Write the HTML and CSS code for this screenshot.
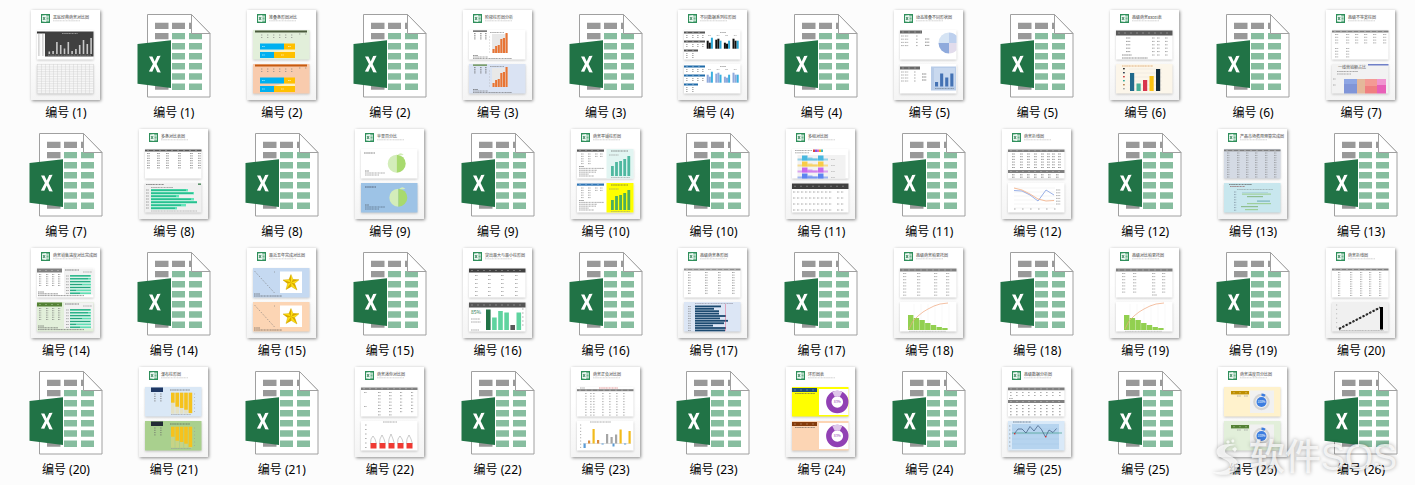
FILE: index.html
```html
<!DOCTYPE html>
<html lang="zh-CN">
<head>
  <meta charset="UTF-8">
  <meta name="viewport" content="width=device-width, initial-scale=1.0">
  <title>编号</title>
  <link rel="stylesheet" href="styles.css">
</head>
<body>
  <!-- shared symbols -->
  <svg class="defs" width="0" height="0" aria-hidden="true">
    <symbol id="xls" viewBox="0 0 74 90">
      <path d="M10.5 4.5H54.5L73 23.5V87H10.5Z" fill="#fff" stroke="#a0a0a0"/>
      <g fill="#999">
        <path d="M18 12.7h13.5v6.3H18zM35 12.7h13v6.3H35zM52 12.7h2.5v6.3H52zM18 22.9h13.5v6.3H18zM18 73.5h13.5v6.3H18z"/>
      </g>
      <g fill="#87bd9f">
        <path d="M35 22.9h13v6.3H35zM35 33h13v6.6H35zM35 43h13v6.6H35zM35 53h13v6.6H35zM35 63.2h13v6.6H35zM35 73.5h13v6.6H35z"/>
        <path d="M52 22.9h13v6.3H52zM52 33h13v6.6H52zM52 43h13v6.6H52zM52 53h13v6.6H52zM52 63.2h13v6.6H52zM52 73.5h13v6.6H52z"/>
      </g>
      <path d="M54.5 4.5V23.5H73Z" fill="#fff" stroke="#a0a0a0"/>
      <path d="M0.5 34L34 30.2V78L0.5 73.8Z" fill="#217346"/>
      <path d="M12 46.6l3.4-.2 2.3 5 2.5-5.3 3.4-.3-4 8.2 4.2 8.4-3.6-.2-2.5-5.6-2.4 5.2-3.4-.2 4-7.7z" fill="#fff"/>
    </symbol>
    <symbol id="logo" viewBox="0 0 9 9">
      <rect width="9" height="9" fill="#2f8f5b"/>
      <path d="M4.8 1.6H8V7.4H4.8Z" fill="#d8eee1"/>
      <path d="M5.4 3.1H7.6M5.4 4.5H7.6M5.4 5.9H7.6" stroke="#2f8f5b" stroke-width=".6"/>
      <path d="M1 1.6L5.2 1V8L1 7.4Z" fill="#e9f6ef"/>
      <path d="M2 3L4.1 6M4.1 3L2 6" stroke="#217346" stroke-width=".8"/>
    </symbol>
  </svg>

  <main>
    <ul class="files" id="files"></ul>
  </main>

  <div class="watermark">
    <svg class="watermark-logo" viewBox="0 0 34 38" aria-hidden="true">
      <path d="M25 6C14 3 3 8 6 15C8 20 19 20 19 26C19 31 9 34 1 33C12 39 28 35 27 25C26 17 14 17 14 12C14 8 20 6 25 6Z"/>
      <path d="M17 1l2 2-2 2-2-2zM22 0l1.5 2-1.5 2-2-2zM24 8l2 2-2 3-3-3z"/>
    </svg>
    <span>软件SOS</span>
  </div>

  <script src="script.js"></script>
</body>
</html>
```

FILE: styles.css
```css
* {
  box-sizing: border-box;
  margin: 0;
  padding: 0;
}

body {
  background-color: #fcfcfc;
  color: #000;
  font-family: "Noto Sans", "Noto Sans CJK SC", sans-serif;
  font-size: 12px;
  min-height: 100vh;
  position: relative;
  overflow-x: hidden;
}

.defs {
  position: absolute;
}

/* file grid */
.files {
  display: grid;
  grid-template-columns: repeat(13, 1fr);
  row-gap: 8px;
  padding: 10px 0 7px 12px;
  list-style: none;
}

.file {
  display: flex;
  flex-direction: column;
  align-items: center;
  gap: 5px;
  color: inherit;
  text-decoration: none;
}

.file-name {
  line-height: 16px;
  white-space: nowrap;
}

.icon {
  display: block;
  width: 74px;
  height: 90px;
}

.thumb {
  display: block;
  width: 69px;
  height: 90px;
  margin-right: 1px;
  background: linear-gradient(#fff 40%, #f4f4f4);
  box-shadow: 1px 1px 3px rgba(0, 0, 0, 0.45);
}

.thumb text {
  font-family: "Noto Sans CJK SC", sans-serif;
}

.thumb-title {
  font-size: 4px;
  font-weight: 500;
  fill: #666;
}

.card {
  filter: drop-shadow(0 1px 1px rgba(0, 0, 0, 0.2));
}

/* watermark */
.watermark {
  position: absolute;
  right: 18px;
  bottom: 3px;
  display: flex;
  align-items: center;
  gap: 4px;
  color: rgba(255, 255, 255, 0.75);
  font-size: 36px;
  line-height: 48px;
  font-family: "Liberation Sans", "Noto Sans CJK SC", sans-serif;
  font-weight: 500;
  text-shadow: 0 0 4px rgba(0, 0, 0, 0.35);
  pointer-events: none;
}

.watermark-logo {
  width: 34px;
  height: 38px;
  fill: currentColor;
  filter: drop-shadow(0 0 2px rgba(0, 0, 0, 0.35));
}
```

FILE: script.js
```js
// drawing helpers, page is 69 x 90
const R = (x, y, w, h, f) => `<rect x="${x}" y="${y}" width="${w}" height="${h}" fill="${f}"/>`;

// line of small print
const L = (x, y, w, c = '#777') =>
  `<path d="M${x} ${y}h${w}" stroke="${c}" stroke-width=".9" stroke-dasharray="1.6 .3 .9 .4" opacity=".65"/>`;

const P = (pts, c, w = 0.6) => `<polyline points="${pts}" fill="none" stroke="${c}" stroke-width="${w}"/>`;

// cells of a table
function cells(xs, y, rows, step, w = 3, c = '#777') {
  let out = '';
  for (let r = 0; r < rows; r++) {
    xs.forEach(x => { out += L(x, y + r * step, w * 0.85, c); });
  }
  return out;
}

function head(x, y, w, h, c) {
  return R(x, y, w, h, c) + `<path d="M${x + 2} ${y + h / 2}h${w - 3}" stroke="#fff" stroke-width=".8" stroke-dasharray="2 4" opacity=".35"/>`;
}

// vertical bars standing on a base line
function bars(x, base, step, w, hs, colors) {
  return hs.map((h, i) => {
    const c = Array.isArray(colors) ? colors[i % colors.length] : colors;
    return h > 0 ? R(x + i * step, base - h, w, h, c) : R(x + i * step, base, w, -h, c);
  }).join('');
}

const hbars = (x, y, step, h, ws, c) => ws.map((w, i) => R(x, y + i * step, w, h, c)).join('');

const note = y => L(10, y, 5, '#444') + L(10, y + 1.5, 15, '#666') + L(10, y + 3, 39, '#666');

function card(y, color, content) {
  return `<g class="card">${R(6, y, 56.5, 29.5, color)}</g>${content}`;
}

const top_ = (color, content) => card(20, color, content);
const low = (color, content) => card(54, color, `<g transform="translate(0 34)">${content}</g>`);

function splitBars(c) {
  return R(8, 20.5, 52, 2, c) + cells([14, 20, 26, 32, 38, 44], 25, 2, 2.5, 1.6) + cells([52, 58], 24, 1, 2, 1.6) +
    '<path d="M37 39.5H48V42H27Z" fill="#fff2c0"/>' +
    R(13, 33.5, 24, 6, '#00b0f0') + R(37, 33.5, 11, 6, '#ffc000') +
    R(13, 42, 14, 6, '#00b0f0') + R(27, 42, 21, 6, '#ffc000') +
    L(15, 36.5, 3, '#dff') + L(15, 45, 3, '#dff') + L(41, 36.5, 3, '#fff') + L(34, 45, 3, '#fff');
}

function stairs(c) {
  return R(10, 20.5, 14, 1.2, c) + cells([11, 17, 22], 23.5, 4, 1.8, 2, '#555') + L(27, 22.5, 14) +
    R(29, 24, 16, 19, '#e8e8e8') + bars(29.5, 43, 2.6, 2.1, [4, 7, 8, 14, 15, 20], '#e87434') +
    cells([26], 27, 6, 3, 1.2, '#aaa') + note(45.5);
}

function clusters(headColor, dark, bright) {
  let out = head(6, 21.5, 21, 2, headColor) + cells([8, 14, 19, 24], 25.5, 2, 2, 2) +
    head(6, 30.5, 21, 2, headColor) + cells([8, 14, 19, 24], 34.5, 2, 2, 2) +
    head(6, 39.5, 14, 2, headColor) + cells([8, 14], 43.5, 3, 2, 2) + L(42, 22.5, 6);
  [[8, 6, 11], [9, 10, 8], [6, 5, 8], [10, 8, 8]].forEach((h, i) => {
    out += bars(28.7 + i * 8.6, 38.7, 2.1, 2, h, [dark, dark, bright]) + L(30 + i * 8.6, 25.5, 3, '#999');
  });
  return out;
}

const apple = (cx, cy) =>
  `<path d="M${cx} ${cy - 9}a9 9 0 0 0 0 18z" fill="#d3edba"/><path d="M${cx} ${cy - 9}a9 9 0 0 1 0 18z" fill="#a8da6e"/>` +
  `<path d="M${cx + 1} ${cy - 9}q3 -3 6 0q-3 1 -6 0z" fill="#d3edba"/>`;

function teal(headColor, bg, bar) {
  return head(6, 20.5, 27, 2.2, headColor) + cells([10, 17], 25, 5, 2.4, 3) + cells([24, 29], 25, 2, 2.4, 3) +
    L(8, 37.5, 5, '#555') + [25, 18, 17, 10, 15].map((w, i) => L(8, 39.4 + i * 1.9, w)).join('') +
    R(35.5, 20, 27, 29.5, bg) + L(40, 22, 17, '#444') + L(38, 26, 10, '#888') +
    bars(40, 47, 4.1, 2.8, [10, 14, 15, 17, 20], bar) + L(40, 48.5, 19, '#999');
}

function stream(y, c) {
  return `<g fill="${c}"><path d="M11.5 ${y}V${y - 2}H42V${y}Z" opacity=".55"/>` +
    `<path d="M16 ${y - 5}h5.5v5h-5.5zM32 ${y - 5}h5.5v5h-5.5z"/><path d="M21.5 ${y - 3}h5v1h5v2h-10z" opacity=".6"/></g>` +
    L(45, y - 1, 4, '#aaa');
}

function greenBars(headColor) {
  return head(6, 20.5, 25, 4, headColor) + cells([8, 15, 21, 27], 26.5, 6, 2.2, 2.6, '#666') +
    L(7, 44, 6, '#444') + L(7, 45.8, 20, '#444') + L(7, 47.6, 46, '#555') +
    R(33, 20.5, 29, 26, '#f2f2f2') + L(34, 22, 14, '#333') + L(52, 24, 9, '#888') +
    [0, 1, 2, 3, 4, 5, 6].map(i => R(39, 27 + i * 2.9, 21, 1.7, '#5fe0b4') +
      R(39, 27.4 + i * 2.9, [20, 18, 20, 12, 20, 6, 10][i], 0.9, '#1d9f78') + L(35, 28 + i * 2.9, 3, '#777')).join('');
}

function star() {
  return '<path d="M7.5 23L28 45.5" stroke="#777" stroke-width=".8" stroke-dasharray=".9 1.5"/>' +
    L(27, 24, 1) + L(7, 46, 6, '#444') + L(7, 48, 28, '#444') + R(33, 23.5, 22, 21.5, '#fff') +
    '<path d="M44 26.5L46 31.5L52 31.8L47.6 35.5L50 42L44.3 38.5L39 41.5L40.6 35.5L36 32L42 31.5Z" fill="#ffe010" stroke="#c9a000" stroke-width=".4"/>' +
    '<path d="M44 26.5V34.5L42 31.5ZM36 32L44.3 34.5L40.6 35.5ZM44.3 34.5L39 41.5L44.3 38.5ZM44.3 34.5L50 42L47.6 35.5ZM44.3 34.5L52 31.8L46 31.5Z" fill="#d8a800"/>';
}

function pareto() {
  return [20, 27, 34, 41, 48, 55].map(x => P(`${x},56 ${x},82`, '#eee', 0.4)).join('') +
    bars(14, 82, 5.7, 5.4, [15, 12, 10, 7, 5, 3, 2], '#92d050') +
    P('15,81 19,73 24,68 29,64 34,61 40,58 46,56 54,55', '#efa67c', 0.7) + L(15, 83.3, 37, '#aaa');
}

function hanging(c) {
  return R(12, 20.5, 12, 4.5, c) + cells([15, 21], 27, 4, 2.3, 2.4, '#666') + L(31, 23, 20, '#444') +
    bars(32, 25.7, 4.4, 3.6, [-21, -21, -21, -21, -21], 'rgba(246, 214, 120, .4)') +
    bars(32, 25.7, 4.4, 3.6, [-10, -14, -15.3, -17, -20.3], '#f6c21c') +
    cells([55], 27, 6, 3.5, 1.2, '#999') + L(32, 47.5, 20, '#999');
}

function donut(c) {
  return head(6, 21, 25, 4, c) + L(9, 26.5, 20, '#555') + R(33, 22, 29.5, 26, '#fff') +
    '<circle cx="51.3" cy="35" r="8.5" fill="none" stroke="#9140b4" stroke-width="5.4"/>' +
    '<path d="M47.5 27.4A8.5 8.5 0 0 1 55.1 27.4" fill="none" stroke="#dfc8ea" stroke-width="5.4"/>' +
    '<text x="51.3" y="36.3" font-size="3.5" text-anchor="middle" fill="#9140b4">83%</text>';
}

function ring(c) {
  return head(13, 24, 18, 3.4, c) + L(19, 29, 4, '#888') + L(26, 29, 4, '#888') + R(32, 23.5, 24, 22.5, '#f1f1f1') +
    '<circle cx="43.5" cy="35" r="7.2" fill="none" stroke="#d5d5d5" stroke-width="2.2"/>' +
    '<path d="M43.5 27.8A7.2 7.2 0 0 1 47 28.8" fill="none" stroke="#3c7de0" stroke-width="2.4"/>' +
    '<circle cx="43.5" cy="35" r="5" fill="#3c7de0"/>' +
    '<text x="43.5" y="36.1" font-size="3" text-anchor="middle" fill="#fff">100%</text>';
}

// title and body of every preview page
const pages = [
  ['黑底经典商务对比图', top_('#fff',
    R(6, 21.5, 8, 2, '#333') + cells([7, 11], 25, 11, 2, 2.5) + R(14, 21.5, 48.5, 25, '#404040') +
    L(31, 23.5, 16, '#ccc') + bars(17.5, 44, 3.8, 1.6, [2.5, 3, 12, 9, 5.5, 12, 3, 5, 9, 14, 10, 16], '#c8c8c8') +
    L(17, 45.2, 43, '#aaa')) +
    low('#f7f7f7', [0, 1, 2, 3, 4, 5, 6, 7, 8, 9, 10, 11, 12].map(i => P(`6,${20.5 + i * 2.4} 62.5,${20.5 + i * 2.4}`, '#ccc', 0.4)).join('') +
      [...Array(15).keys()].map(i => P(`${6.5 + i * 4},20 ${6.5 + i * 4},49.5`, '#ccc', 0.4)).join(''))],
  ['堆叠条形图对比', top_('#e2efda', splitBars('#4a5a3c')) + low('#f8cbad', splitBars('#c55a11'))],
  ['阶梯柱形图分析', top_('#fff', stairs('#444')) + low('#dae3f3', stairs('#548235'))],
  ['不同数据系列柱形图', top_('#fff', clusters('#555', '#111', '#2aa8d8')) + low('#fff', clusters('#1f6aa8', '#8faadc', '#3bb0e0'))],
  ['动态堆叠不同形状图', top_('#fff',
    head(6, 20.5, 22, 3, '#696969') + cells([7, 11], 26, 4, 3.2, 4) + cells([22], 26, 4, 3.2, 2) + cells([31], 29, 3, 3.2, 5, '#444') +
    '<path d="M55 33V22.5A10.5 10.5 0 0 0 44.5 33Z" fill="#d6e4f4"/><path d="M55 33H44.5A10.5 10.5 0 0 0 55 43.5Z" fill="#8faadc"/>' +
    '<path d="M55 33V22.5A10.5 10.5 0 0 1 62.5 25.7V33Z" fill="#bdd0ee"/><path d="M55 33H62.5V40.3A10.5 10.5 0 0 1 55 43.5Z" fill="#e2dcec"/>') +
    low('#fff', head(6, 22.5, 20, 3, '#696969') + cells([7, 11], 28, 4, 3, 4) + cells([20], 28, 4, 3, 2) + cells([28], 30, 3, 3, 5, '#333') +
      R(37, 22.5, 25, 24, '#b8cce8') + R(40, 24, 21, 18.5, '#c9d9ef') + bars(41, 42.5, 5.1, 3.1, [4.5, 13, 9, 13], '#4472b4') + L(41, 44.5, 19, '#678'))],
  ['高级商务Excel表', top_('#fff',
    head(6, 20.5, 56.5, 5, '#595959') + cells([16], 28, 5, 3.4, 5, '#555') + cells([42, 47, 55], 28, 6, 3.4, 3, '#666') + L(12, 45, 10, '#444') + L(12, 48, 26, '#444')) +
    low('#fcf6ea', L(12, 22, 31, '#d08030') + [0, 1, 2, 3, 4, 5].map(i => P(`19,${25 + i * 4} 52,${25 + i * 4}`, '#e4dfd4', 0.4) +
      R(13, 24 + i * 4, 1.8, 1.4, ['#333', '#345', '#c44', '#3a9', '#b85', '#aaa'][i])).join('') +
      bars(20, 47, 6.5, 4.2, [18, 7.5, 11, 15, 22], ['#216a8c', '#45b097', '#d8344d', '#f9c113', '#122b3c']))],
  ['高级不等宽柱图', top_('#fff',
    head(6, 20.5, 56.5, 2, '#808080') + cells([9, 20, 29, 38, 47, 57], 24.5, 4, 2.8, 4) + cells([9, 20], 38.5, 4, 2.8, 4)) +
    low('#f2f2f2', '<text x="12" y="25" font-size="4" fill="#555">一线营销额占比</text>' + L(11, 27.5, 21) + L(11, 30, 14) + R(42, 20, 20.5, 1.5, '#7080c8') +
      cells([7], 35, 2, 6, 3) + R(18, 35, 13, 14.5, '#8095d8') + R(18, 35, 13, 5, '#8ea6e4') + R(31, 35, 8, 14.5, '#e4b89a') +
      R(39, 35, 12, 14.5, '#f07f80') + R(39, 35, 12, 7, '#f49a94') + R(51, 35, 9, 14.5, '#e860b8') + R(51, 35, 9, 6, '#f095d0'))],
  ['多条对比表图', top_('#fff',
    head(6, 20.5, 56.5, 2, '#555') + cells([8, 18, 27, 39, 51, 59], 24.5, 7, 2.4, 3.5, '#555')) +
    low('#f0f0f0', L(7, 21.5, 18, '#444') + R(59, 20.5, 3, 1.3, '#3a7a4a') + L(12, 24.5, 22) + hbars(12, 26, 3, 2.4, [37, 43, 28, 43, 46, 35, 26], '#62e6ba') +
      hbars(12, 26.6, 3, 1.2, [35, 42, 25, 40, 46, 30, 24], '#20b486') + cells([7], 27, 7, 3, 3.5, '#666') + L(12, 48, 46, '#999'))],
  ['苹果百分比', top_('#fff', L(9, 24, 11, '#333') + apple(41.7, 34.7) + L(10, 42, 4, '#444') + L(10, 44, 20) + L(10, 46, 14)) +
    low('#9dc3e6', L(10, 24, 11, '#223') + apple(43.3, 34.7) + L(10, 42, 4, '#444') + L(10, 44, 20, '#456') + L(10, 46, 14, '#456'))],
  ['商务平铺柱形图', top_('#fff', teal('#595959', '#e2f5f2', '#4fb8a0')) + low('#fff', teal('#2e75b6', '#ffff00', '#4cae5c'))],
  ['多组对比图', top_('#fff', R(11.5, 26, 48, 23.5, '#f2f2f2') + L(9, 21.5, 17) + L(9, 23.8, 14) +
    bars(27, 23, 2, 2, [2.5, 2.5, 2.5, 2.5, 2.5], ['#e04040', '#7a60e0', '#e060c0', '#f0b020', '#40b8c0']) +
    stream(31.5, '#48b8e0') + stream(37.5, '#f8cc48') + stream(43.5, '#c868ec') + stream(49.5, '#5c84f0')) +
    low('#fff', head(6, 20.5, 56.5, 5.5, '#404040') + cells([7, 11, 15, 19, 23, 27, 31, 35, 39, 43, 51, 55], 29, 4, 6, 2.6, '#666'))],
  ['商务折线图', top_('#fff', head(6, 20.5, 56.5, 2.5, '#808080') + cells([10, 18, 25, 32, 39, 45, 50, 56], 25, 6, 2.7, 3.4, '#555') +
    head(6, 41, 56.5, 3, '#808080') + cells([10, 18, 25, 32, 39, 46, 54], 45.8, 2, 2.4, 3, '#444')) +
    low('#fff', [25, 29, 33, 37, 41, 45].map(y => P(`12,${y} 53,${y}`, '#e5e5e5', 0.4)).join('') +
      P('12,27.5 20,28 28,32 36,38 44,27 52,32', '#6f8fdc', 0.7) + P('12,25 20,27 28,31 36,36 44,38 52,37.5', '#f0a070', 0.7) + cells([54], 27, 6, 2.8, 5) + cells([12, 20, 28, 36, 44, 52], 46, 1, 2, 2))],
  ['产品市场费用预算完成图', top_('#d4dae4', head(6, 20.5, 56.5, 1.8, '#808080') + cells([9, 19, 28, 37, 47, 56], 24, 11, 2.4, 2.8)) +
    low('#c8e7ee', L(11, 21.5, 23, '#444') + L(12, 23.5, 15, '#844') + L(19, 26.5, 36, '#899') + cells([16], 29, 8, 2.6, 2.6, '#678') +
      R(24, 30.5, 29, 1.2, '#9fcf9c') + R(29, 33, 16, 1.2, '#8ebe90') + R(39, 37.5, 13, 1.2, '#7ab4bc') + R(29, 40, 24, 1.2, '#9fcf9c') +
      R(23, 43, 17, 1.2, '#8ebe90') + R(27, 46, 13, 1.2, '#9fcf9c') + P('24,29.5 50,29.5', '#7ab', 0.3))],
  ['商务销售进度对比完成图', top_('#fff', greenBars('#808080')) + low('#e2efda', greenBars('#548235'))],
  ['最近五年完成对比图', top_('#c5d9f1', star()) + low('#fcd5b4', star())],
  ['突出最大与最小柱形图', top_('#fff', head(6, 20.5, 56.5, 4, '#404040') + cells([12, 25, 38, 52], 27.5, 6, 4, 3)) +
    low('#fff', head(6, 20.5, 56.5, 5, '#555') + '<text x="8" y="32" font-size="5" fill="#217346">85%</text>' + L(8, 37, 9) + L(8, 40, 10) + L(8, 48, 8) +
      bars(23, 48, 6.1, 4.6, [20.5, 12.5, 19, 17.5, 5, 17.5], ['#217346', '#5fd39f', '#5fd39f', '#5fd39f', '#595959', '#5fd39f']) + cells([59], 27, 5, 4, 2))],
  ['高级商务条形图', top_('#fff', head(6, 20.5, 56.5, 2, '#909090') + cells([10, 27, 40, 54], 24.5, 9, 2.6, 3, '#666')) +
    low('#dce6f5', L(17, 21.5, 38, '#889') + hbars(17, 23.5, 2.4, 1.8, [26, 19, 24, 24, 31, 25, 33, 29, 18, 31, 30], '#1c4a70') +
      P('47.5,22 47.5,49', '#e06080', 0.5) + cells([10], 24.5, 11, 2.4, 3.4))],
  ['高级商务帕累托图', top_('#fff', head(6, 20.5, 56.5, 3, '#808080') + cells([9, 23, 40, 52], 25.5, 8, 3.1, 4)) + low('#fff', '') + pareto()],
  ['高级对比帕累托图', top_('#fff', head(6, 20.5, 56.5, 3, '#808080') + cells([12, 23, 42, 52], 25.5, 7, 3.1, 4) + L(42, 47, 5)) + low('#fff', '') + pareto()],
  ['商务折线图', top_('#fff', head(6, 20.5, 56.5, 2, '#808080') + cells([12, 24, 34, 43, 53], 24.5, 11, 2.3, 2.6)) +
    low('#f0f0f0', '<path d="M13 47L54 25.5" stroke="#000" stroke-width="2" stroke-dasharray="2.2 1.6"/><path d="M13 47L54 25.5" stroke="#777" stroke-width=".5"/>' +
      R(54, 25, 3, 22.5, '#000') + cells([10], 23, 6, 4.4, 1.4, '#999') + L(13, 48.5, 45, '#999'))],
  ['瀑布柱形图', top_('#dae8f6', hanging('#1f3864')) + low('#a9d08e', hanging('#222b35'))],
  ['商务迷你对比图', top_('#fff', head(6, 20.5, 56.5, 2.5, '#808080') + cells([23, 34], 25.5, 8, 3.2, 3, '#666') + cells([45, 56], 25.5, 7, 3.2, 2.5, '#666') + cells([9], 25.5, 2, 14, 3)) +
    low('#fff', L(28, 21, 14) + bars(15.5, 47.5, 9, 6, [5.5, 5.5, 5.5, 5.5, 5.5], '#ef3a33') +
      [0, 1, 2, 3, 4].map(i => P(`${15.5 + i * 9},43 ${16 + i * 9},38 ${18 + i * 9},${35 - i % 3} ${20 + i * 9},38 ${21.5 + i * 9},43`, '#999', 0.5)).join('') + cells([10], 24, 6, 4.5, 2))],
  ['商务正负对比图', top_('#fff', L(9, 21, 5) + L(28, 21, 19, '#d05050') + head(6, 22.2, 56.5, 2, '#808080') + cells([14, 19, 22, 31, 38, 45, 52], 26.5, 9, 2.7, 2.4, '#888')) +
    low('#fff', L(19, 21, 21) + P('12,42.5 60,42.5', '#bbb', 0.4) + bars(12.5, 42.5, 4.5, 2.2, [-4.5, 3, 14.5, 3.5, -1, 9.5, 6.5, 9, 14, -1, 12.5], ['#5b9bd5', '#d98a3c', '#f2bb1c', '#d98a3c', '#5b9bd5', '#a5a5a5', '#a5a5a5', '#a5a5a5', '#f2bb1c', '#5b9bd5', '#f2bb1c']) +
      R(41.5, 42.5, 2, 3, '#5b9bd5') + cells([9], 24, 8, 3.2, 1.4))],
  ['环形图表', top_('#ffff00', donut('#1f4e79')) + low('#fcd5b4', donut('#843c0c'))],
  ['高级数据分析图', top_('#fff', head(6, 20.5, 56.5, 2.8, '#808080') + cells([8, 14, 20, 26, 32, 38, 44, 50, 57], 25.5, 2, 3, 2) + L(7, 31.5, 4) +
    head(6, 33, 56.5, 3, '#808080') + cells([8, 14, 20, 26, 32, 38, 44, 50, 57], 38.5, 4, 3.1, 2, '#555')) +
    low('#d9e9f8', L(11, 21, 18, '#345') + R(10, 23, 47, 25, '#b6d4ef') + [0, 1, 2, 3].map(i => P(`10,${28 + i * 5} 57,${28 + i * 5}`, '#a3c6e6', 0.4)).join('') + P('10,32 60,32', '#3f9f8a', 0.7) +
      P('12.5,32.5 16,28 20,28 24,32 28,25.5 32,30 36,24.5 39.5,28.5 43.5,36 47,29 51,31.5 54.5,27.5', '#3c587c', 0.7) +
      R(12, 32, 1.4, 1.4, '#d03030') + R(43, 35, 1.4, 1.4, '#d03030') + cells([7], 25, 6, 4, 1.6))],
  ['商务进度百分比图', top_('#fff2cc', ring('#bf8f00')) + low('#e2efda', ring('#548235'))]
];

const list = document.getElementById('files');

function addFile(n, icon) {
  const li = document.createElement('li');
  li.innerHTML = `<a class="file" href="#">${icon}<span class="file-name">编号 (${n})</span></a>`;
  list.appendChild(li);
}

pages.forEach(([title, body], i) => {
  addFile(i + 1, `<svg class="thumb" viewBox="0 0 69 90" aria-hidden="true"><use href="#logo" x="10" y="4" width="9" height="9"/>
    <text class="thumb-title" x="22" y="8.5">${title}</text>${L(22, 10.8, 27, '#b5b5b5')}${body}</svg>`);
  addFile(i + 1, '<svg class="icon" viewBox="0 0 74 90" aria-hidden="true"><use href="#xls"/></svg>');
});
```
